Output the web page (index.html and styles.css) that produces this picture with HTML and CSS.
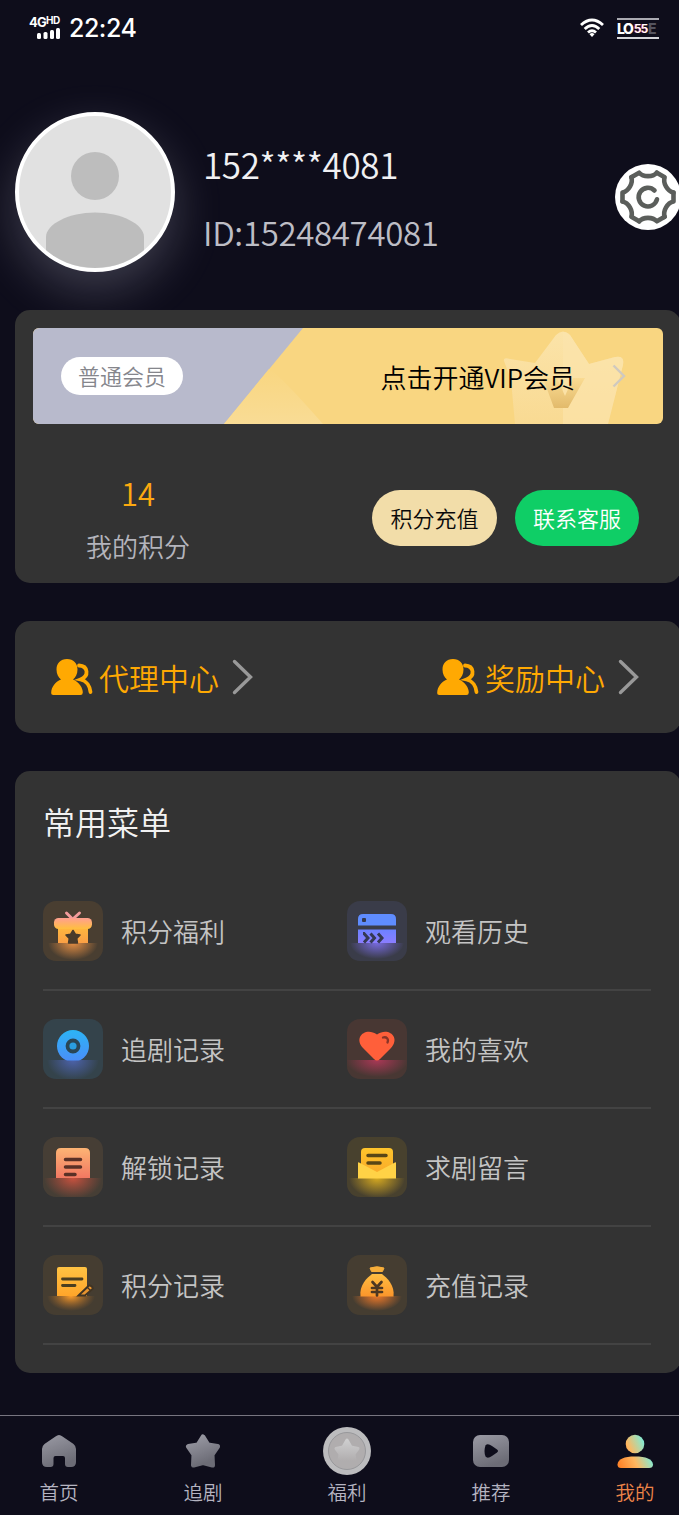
FILE: index.html
```html
<!DOCTYPE html>
<html lang="zh-CN">
<head>
<meta charset="utf-8">
<title>我的</title>
<link rel="stylesheet" href="styles.css">
</head>
<body>
<div class="screen">
  <header class="status">
    <div class="signal">
      <div class="net">4G<span class="hd">HD</span></div>
      <svg class="bars" width="26" height="11" viewBox="0 0 26 11" fill="#fff"><rect x="1" y="5" width="4" height="6" rx="1.500"/><rect x="7.500" y="4" width="4" height="7" rx="1.500"/><rect x="14" y="2" width="4" height="9" rx="1.500"/><rect x="20" y="0" width="4" height="11" rx="1.500"/></svg>
    </div>
    <div class="clock">22:24</div>
    <svg class="wifi" width="24" height="20" viewBox="0 0 24 20" fill="none" stroke="#fff" stroke-width="2.900"><path d="M1 7Q12-3 23 7"/><path d="M4.700 11Q12 4 19.300 11"/><path d="M8 14.500Q12 11 16 14.500"/><path d="M9.500 16.200Q12 14 14.500 16.200L12 19Z" fill="#fff" stroke="none"/></svg>
    <div class="battery"><span class="lo">LO</span><span class="level">55</span><span class="e">E</span></div>
  </header>

  <section class="profile">
    <svg class="avatar" viewBox="0 0 152 152"><circle cx="76" cy="60" r="24" fill="#bdbdbd"/><path d="M27 160V121C27 108 50 96.500 76 96.500S125 108 125 121V160Z" fill="#bdbdbd"/></svg>
    <div class="who">
      <div class="phone">152****4081</div>
      <div class="uid">ID:15248474081</div>
    </div>
    <svg class="gear" width="66" height="66" viewBox="-33 -33 66 66" fill="none" stroke="#5b5e5b" stroke-width="4.600" stroke-linecap="round" stroke-linejoin="round">
      <defs><path id="tooth" d="M25.500-4.500V4.500C19.400 5.800 14.700 13.900 16.650 19.830"/></defs>
      <circle r="33" fill="#fff" stroke="none"/>
      <use href="#tooth"/><use href="#tooth" transform="rotate(60)"/><use href="#tooth" transform="rotate(120)"/><use href="#tooth" transform="rotate(180)"/><use href="#tooth" transform="rotate(240)"/><use href="#tooth" transform="rotate(300)"/>
      <path d="M6.500-6.500A9.300 9.300 0 1 0 9 2.300"/>
    </svg>
  </section>

  <section class="card member">
    <div class="banner">
      <svg class="banner-art" viewBox="0 0 630 96">
        <defs><linearGradient id="vee" x2="0" y2="1"><stop stop-color="#fadb92"/><stop offset="1" stop-color="#e2ba6b"/></linearGradient>
        <linearGradient id="crown" x2="0" y2="1"><stop stop-color="#fce9ba"/><stop offset="1" stop-color="#f9dc9a"/></linearGradient>
        <linearGradient id="ray" x2="0" y2="1"><stop stop-color="#f9d681"/><stop offset="1" stop-color="#f9dc95"/></linearGradient></defs>
        <rect width="630" height="96" fill="#f9d681"/>
        <path d="M0 0H270L191 96H0Z" fill="#b8bacc"/>
        <path d="M191 96L236 41Q246 46 290 96Z" fill="url(#ray)"/>
        <path d="M482 96L478 52L471 33Q470 29 477 31L502 35L523 7Q530 0 537 7L556 36L582 29Q592 27 590 37L575 96Z" fill="url(#crown)" opacity=".7"/>
        <path d="M530 4Q535 4 537 7L556 36L582 29Q592 27 590 37L575 96H530Z" fill="#fce4ad" opacity=".6"/>
        <path d="M510 50H524L532 68L540 50H552L535 80H521Z" fill="url(#vee)"/>
      </svg>
      <span class="level-tag">普通会员</span>
      <span class="vip">点击开通VIP会员</span>
      <svg class="vip-arrow" width="14" height="24" viewBox="0 0 14 24" fill="none" stroke="#cfc9bf" stroke-width="2.400"><path d="M1.500 1.500L12 12L1.500 22.500"/></svg>
    </div>
    <div class="points-row">
      <div class="points"><div class="num">14</div><div class="cap">我的积分</div></div>
      <button class="pill recharge">积分充值</button>
      <button class="pill service">联系客服</button>
    </div>
  </section>

  <section class="card centers">
    <div class="center">
      <svg width="42" height="38" viewBox="0 0 42 38"><g id="people"><path d="M16 1C22.500 1 26.500 5.500 26.500 11.500C26.500 16 24.500 19.500 22 21.500C28 24 32 30 31.800 34.500Q31.700 37 29.500 37H2.500Q0 37 .2 34.500C.4 29 4 24 10 21.500C7.500 19.500 5.500 16 5.500 11.500C5.500 5.500 9.500 1 16 1Z" fill="#ffa902"/><path d="M28 7.500C37 8 38.500 18 29.500 21.500C36 23 39 29 39.500 34" fill="none" stroke="#ffa902" stroke-width="3.800" stroke-linecap="round"/></g></svg>
      <span>代理中心</span>
      <svg class="go" width="21" height="36" viewBox="0 0 21 36"><path id="chev" d="M2.500 2.500L18.500 18L2.500 33.500" fill="none" stroke="#999" stroke-width="3.400" stroke-linecap="round"/></svg>
    </div>
    <div class="center">
      <svg width="42" height="38" viewBox="0 0 42 38"><use href="#people"/></svg>
      <span>奖励中心</span>
      <svg class="go" width="21" height="36" viewBox="0 0 21 36"><use href="#chev"/></svg>
    </div>
  </section>

  <section class="card menu">
    <h2>常用菜单</h2>
    <div class="grid">
      <div class="item"><svg class="tile t-orange" viewBox="0 0 60 60">
        <defs><linearGradient id="g1" x2="0" y2="1"><stop stop-color="#ff9f91"/><stop offset="1" stop-color="#ffbf3f"/></linearGradient><linearGradient id="g1b" x2="0" y2="1"><stop stop-color="#ffb73e"/><stop offset="1" stop-color="#fb9f45"/></linearGradient><radialGradient id="w1"><stop stop-color="#f49645" stop-opacity=".9"/><stop offset="1" stop-color="#f49645" stop-opacity="0"/></radialGradient></defs>
        <svg y="42" width="60" height="18" viewBox="0 42 60 18"><ellipse cx="30" cy="42" rx="25" ry="17" fill="url(#w1)"/></svg>
        <path d="M28.500 17L23.500 12M31 17L36.500 12" stroke="#f39c9c" stroke-width="3" stroke-linecap="round"/>
        <path d="M15 27H45V42H15Z" fill="url(#g1b)"/><rect x="11" y="17" width="38" height="11" rx="4.500" fill="url(#g1)"/>
        <path d="M30 29.500L32.300 33.200L37 34L33.700 37.400L34.400 42H25.600L26.300 37.400L23 34L27.700 33.200Z" fill="#493b2b" stroke="#493b2b" stroke-width="1.600" stroke-linejoin="round"/></svg><span>积分福利</span></div>

      <div class="item"><svg class="tile t-indigo" viewBox="0 0 60 60">
        <defs><linearGradient id="g2" x2="0" y2="1"><stop stop-color="#6c82ff"/><stop offset="1" stop-color="#8b7dff"/></linearGradient><radialGradient id="w2"><stop stop-color="#7e70ef" stop-opacity=".9"/><stop offset="1" stop-color="#7e70ef" stop-opacity="0"/></radialGradient></defs>
        <svg y="42" width="60" height="18" viewBox="0 42 60 18"><ellipse cx="30" cy="42" rx="27" ry="16" fill="url(#w2)"/></svg>
        <path d="M11 24.500V18Q11 13 16 13H44Q49 13 49 18V24.500Z" fill="#5f8cff"/><path d="M11 28.500H49V42H11Z" fill="url(#g2)"/><rect x="15" y="17" width="4" height="4" rx="1" fill="#333950"/>
        <path d="M16 32.500H17L21 37L17 41.500M23.500 32.500L27.500 37L23.500 41.500M31 32.500L35 37L31 41.500" fill="none" stroke="#343953" stroke-width="3"/></svg><span>观看历史</span></div>

      <div class="item"><svg class="tile t-blue" viewBox="0 0 60 60">
        <defs><linearGradient id="g3" x2="0" y2="1"><stop stop-color="#2cb4f5"/><stop offset="1" stop-color="#4b8df9"/></linearGradient><radialGradient id="w3"><stop stop-color="#526ac3" stop-opacity=".8"/><stop offset="1" stop-color="#526ac3" stop-opacity="0"/></radialGradient></defs>
        <svg y="41" width="60" height="19" viewBox="0 41 60 19"><ellipse cx="30" cy="41" rx="26" ry="20" fill="url(#w3)"/></svg>
        <svg width="60" height="41.500" viewBox="0 0 60 41.500"><circle cx="30" cy="27" r="16" fill="url(#g3)"/></svg><circle cx="30" cy="27" r="5.500" fill="#2a9ee0" stroke="#294656" stroke-width="3.800"/></svg><span>追剧记录</span></div>

      <div class="item"><svg class="tile t-red" viewBox="0 0 60 60">
        <defs><radialGradient id="w4"><stop stop-color="#b5385a" stop-opacity=".9"/><stop offset="1" stop-color="#b5385a" stop-opacity="0"/></radialGradient></defs>
        <svg y="41" width="60" height="19" viewBox="0 41 60 19"><ellipse cx="30" cy="41" rx="31" ry="17" fill="url(#w4)"/></svg>
        <path d="M30 41.500Q28.500 41.500 27 40L16 29C6 18 19 7.500 30 15.500C41 7.500 54 18 44 29L33 40Q31.500 41.500 30 41.500Z" fill="#ff5f3a"/><path d="M36 18.500C39.500 17.500 42 20 40.500 23.500" fill="none" stroke="#8a3427" stroke-width="2.300" stroke-linecap="round"/></svg><span>我的喜欢</span></div>

      <div class="item"><svg class="tile t-peach" viewBox="0 0 60 60">
        <defs><linearGradient id="g5" x2="0" y2="1"><stop stop-color="#fdb474"/><stop offset="1" stop-color="#f27862"/></linearGradient><radialGradient id="w5"><stop stop-color="#c9523f"/><stop offset="1" stop-color="#b74f3d" stop-opacity="0"/></radialGradient></defs>
        <svg y="41" width="60" height="19" viewBox="0 41 60 19"><ellipse cx="30" cy="41" rx="29" ry="21" fill="url(#w5)"/></svg>
        <path d="M13 41V16Q13 11 18 11H42Q47 11 47 16V41Z" fill="url(#g5)"/><path d="M22.500 22.500H37.500M22.500 30H37.500M22.500 37.500H32" stroke="#5a3026" stroke-width="3.500" stroke-linecap="round"/></svg><span>解锁记录</span></div>

      <div class="item"><svg class="tile t-yellow" viewBox="0 0 60 60">
        <defs><linearGradient id="g6" x2="0" y2="1"><stop stop-color="#ffc52b"/><stop offset="1" stop-color="#f9a92a"/></linearGradient><radialGradient id="w6"><stop stop-color="#d7aa21"/><stop offset="1" stop-color="#d7aa21" stop-opacity="0"/></radialGradient></defs>
        <svg y="41" width="60" height="19" viewBox="0 41 60 19"><ellipse cx="30" cy="41" rx="28" ry="20" fill="url(#w6)"/></svg>
        <path d="M14 38V15Q14 11 18 11H42Q46 11 46 15V38Z" fill="url(#g6)"/><path d="M21 18.500H39M21 26H33" stroke="#594616" stroke-width="3.500" stroke-linecap="round"/><path d="M11 26Q11 24.500 13 26L30 35L47 26Q49 24.500 49 26V41.500H11Z" fill="#ffd246"/></svg><span>求剧留言</span></div>

      <div class="item"><svg class="tile t-gold" viewBox="0 0 60 60">
        <defs><linearGradient id="g7" x2="0" y2="1"><stop stop-color="#ffc343"/><stop offset="1" stop-color="#ffa52a"/></linearGradient><radialGradient id="w7"><stop stop-color="#ff9e29"/><stop offset="1" stop-color="#b66e27" stop-opacity="0"/></radialGradient></defs>
        <svg y="41" width="60" height="19" viewBox="0 41 60 19"><ellipse cx="28" cy="41" rx="24" ry="15" fill="url(#w7)"/></svg>
        <path d="M14 41V14Q14 12 16 12H42Q44 12 44 14V41Z" fill="url(#g7)"/><path d="M19.500 24H39M19.500 30.500H32" stroke="#4b3e20" stroke-width="2.800" stroke-linecap="round"/><path d="M35.500 40.500L46 30.500Q48.500 30 50 33.500L42 40.500Z" fill="#e8942f" stroke="#403424" stroke-width="1.900"/><path d="M44 32L47.500 35.500" stroke="#403424" stroke-width="1.300"/></svg><span>积分记录</span></div>

      <div class="item"><svg class="tile t-gold" viewBox="0 0 60 60">
        <defs><linearGradient id="g8" x2="0" y2="1"><stop stop-color="#ffbe42"/><stop offset="1" stop-color="#fb952b"/></linearGradient><radialGradient id="w8"><stop stop-color="#ee7929"/><stop offset="1" stop-color="#ee7929" stop-opacity="0"/></radialGradient></defs>
        <svg y="41" width="60" height="19" viewBox="0 41 60 19"><ellipse cx="30" cy="41" rx="25" ry="15" fill="url(#w8)"/></svg>
        <path d="M23 13Q30 10.500 37 13L35.500 16.500H24.500Z" fill="#f7ae3a" stroke="#f7ae3a" stroke-linejoin="round"/><path d="M13.500 41.500C12 30 20 23 25 19H35C40 23 48 30 46.500 41.500Z" fill="url(#g8)"/><path d="M25.500 27L30 32L34.500 27M30 32V40.500M25 33H35M25 37H35" fill="none" stroke="#4d3722" stroke-width="2.700" stroke-linecap="round"/></svg><span>充值记录</span></div>
    </div>
  </section>

  <nav class="tabs">
    <div class="tab"><svg width="48" height="48" viewBox="0 0 48 48">
      <defs><linearGradient id="gray" x2=".4" y2="1"><stop stop-color="#9b9ba5"/><stop offset="1" stop-color="#6c6c76"/></linearGradient></defs>
      <path d="M20.500 9.500Q24 6.500 27.500 9.500L38.500 17Q41 19 41 22V35Q41 40 36 40H33Q30 40 30 37V31Q30 29 28 29H20.500Q18.500 29 18.500 31V37Q18.500 40 15.500 40H12Q7 40 7 35V22Q7 19 9.500 17Z" fill="url(#gray)"/></svg><span>首页</span></div>
    <div class="tab"><svg width="48" height="48" viewBox="0 0 48 48"><path d="M24 10L29 18L38.500 19.500L33 27.500L33.500 38L24 35.500L14.500 38L15 27.500L9.500 19.500L19 18Z" fill="url(#gray)" stroke="url(#gray)" stroke-width="5" stroke-linejoin="round"/></svg><span>追剧</span></div>
    <div class="tab"><svg width="48" height="48" viewBox="0 0 48 48"><defs><linearGradient id="coin-star" x2="0" y2="1"><stop stop-color="#cececf"/><stop offset="1" stop-color="#b0adae"/></linearGradient></defs><circle cx="24" cy="24" r="24" fill="#bcbcbe"/><circle cx="24" cy="24" r="18.500" fill="#b0adae" stroke="#98989b"/><path d="M24 13L28 20L35 21.500L31 27L32 34L24 32L16 34L17 27L13 21.500L20 20Z" fill="url(#coin-star)" stroke="url(#coin-star)" stroke-width="3" stroke-linejoin="round"/></svg><span>福利</span></div>
    <div class="tab"><svg width="48" height="48" viewBox="0 0 48 48"><rect x="6" y="8" width="36" height="32" rx="7" fill="url(#gray)"/><path d="M18.500 18.500Q20.500 16 25 19L30 22.500Q32 24 30 25.500L25 29Q20.500 32 18.500 29.500Q16.500 24 18.500 18.500Z" fill="#0e0d1b"/></svg><span>推荐</span></div>
    <div class="tab active"><svg width="48" height="48" viewBox="0 0 48 48"><defs><linearGradient id="me" gradientUnits="userSpaceOnUse" x1="7" y1="34" x2="38" y2="20"><stop stop-color="#ff852b"/><stop offset=".45" stop-color="#ffb760"/><stop offset="1" stop-color="#72f2e4"/></linearGradient></defs><g fill="url(#me)"><circle cx="24" cy="17" r="9.300"/><path d="M6.500 37.500C7 32 13 29.500 24 29.500S41.500 32 42 37.500Q42 41 38 41H10Q6.500 41 6.500 37.500Z"/></g></svg><span>我的</span></div>
  </nav>
</div>
</body>
</html>
```
FILE: styles.css
```css
* { box-sizing: border-box; }
body { margin: 0; background: #0e0d1b; }
.screen {
  width: 679px;
  height: 1515px;
  overflow: hidden;
  display: flex;
  flex-direction: column;
  background: #0e0d1b;
  color: #c4c4c4;
  font-family: "Noto Sans CJK SC", "Noto Sans", sans-serif;
  font-weight: 350;
}
svg { display: block; flex: none; }

.status {
  height: 56px;
  flex: none;
  display: flex;
  align-items: center;
  padding: 0 20px 0 29px;
  color: #fff;
  font-family: Inter, Roboto, sans-serif;
}
.signal { width: 40px; height: 24px; }
.net { font: 700 13px/13px Inter, sans-serif; letter-spacing: -.8px; height: 12px; white-space: nowrap; }
.hd { font-size: 10px; letter-spacing: -.4px; vertical-align: 3px; line-height: 1px; }
.bars { margin-left: 7px; }
.clock { font: 500 25px/30px Inter, sans-serif; width: 76px; letter-spacing: -.5px; }
.wifi { margin-left: auto; }
.battery {
  width: 42px;
  height: 21px;
  margin-left: 13px;
  display: flex;
  align-items: center;
  border-top: 2px solid #aaaab2;
  border-bottom: 2px solid #d5d5da;
  font: 800 14px/17px Inter, sans-serif;
}
.lo { letter-spacing: -1.5px; width: 17px; }
.level { color: #fff; font-size: 12px; font-weight: 600; letter-spacing: -.9px; width: 14px; text-shadow: -1px 0 #c8314e; }
.e { color: #54535e; }

.profile { height: 254px; flex: none; display: flex; padding: 56px 0 0 15px; }
.avatar {
  width: 160px;
  height: 160px;
  border: 4px solid #fff;
  border-radius: 50%;
  background: #e1e1e1;
  box-shadow: 0 18px 48px rgba(222, 222, 240, .23);
}
.who { margin-left: 28px; padding-top: 27px; }
.phone { font-size: 35px; line-height: 50px; letter-spacing: -.35px; color: #f0f0f3; }
.uid { font-size: 33px; line-height: 48px; letter-spacing: -.33px; margin-top: 19px; color: #bdbdc5; }
.gear { margin: 52px -2px 0 auto; }

.card {
  flex: none;
  width: 666px;
  margin: 0 0 38px 15px;
  border-radius: 15px;
  background: #333;
  position: relative;
}
.member { height: 273px; padding: 18px; }
.banner {
  position: relative;
  height: 96px;
  border-radius: 6px;
  overflow: hidden;
  display: flex;
  align-items: center;
  padding: 0 37px 0 28px;
}
.banner-art { position: absolute; inset: 0; }
.level-tag, .vip, .vip-arrow { position: relative; }
.level-tag {
  width: 122px;
  height: 38px;
  border-radius: 19px;
  background: #fff;
  color: #85868c;
  font-size: 22px;
  line-height: 37px;
  text-align: center;
}
.vip { margin-left: auto; color: #000; font-size: 26px; line-height: 38px; padding-top: 1px; }
.vip-arrow { margin-left: 37px; }
.points-row { display: flex; align-items: flex-start; padding: 46px 24px 0 0; }
.points { width: 210px; text-align: center; }
.num { color: #fca910; font-size: 31px; line-height: 46px; }
.cap { color: #b4b4bc; font-size: 26px; line-height: 38px; margin-top: 11px; }
.pill {
  width: 125px;
  height: 56px;
  margin: 20px 0 0;
  padding: 0 0 2px;
  border: 0;
  border-radius: 28px;
  font: inherit;
  font-size: 22px;
  line-height: 54px;
}
.recharge { margin-left: auto; background: #f2dda9; color: #090909; }
.service { width: 124px; margin-left: 18px; background: #0fce66; color: #fff; }

.centers { height: 112px; display: flex; justify-content: space-between; align-items: center; padding: 0 42px 0 36px; }
.center { display: flex; align-items: center; color: #ffa902; font-size: 30px; line-height: 44px; }
.center span { margin: 0 13px 0 6px; }

.menu { height: 602px; padding: 27px 28px 28px; }
.menu h2 { margin: 0; height: 75px; font-size: 32px; line-height: 46px; font-weight: 350; color: #f2f2f2; }
.grid { display: grid; grid-template-columns: 304px 304px; grid-auto-rows: 118px; }
.item {
  display: flex;
  align-items: center;
  border-bottom: 2px solid #434343;
  font-size: 26px;
}
.item span { margin-left: 18px; line-height: 38px; }
.tile { width: 60px; height: 60px; border-radius: 13px; }
.t-orange { background: #493e31; }
.t-indigo { background: #3a3c49; }
.t-blue { background: #34434b; }
.t-red { background: #483733; }
.t-peach { background: #463e35; }
.t-yellow { background: #48412e; }
.t-gold { background: #453d31; }

.tabs {
  flex: none;
  width: 720px;
  height: 100px;
  margin: 4px 0 0 -13px;
  border-top: 1px solid #777580;
  display: grid;
  grid-template-columns: repeat(5, 144px);
}
.tab {
  display: flex;
  flex-direction: column;
  align-items: center;
  padding-top: 11px;
  color: #b5b4c1;
  font-size: 19.5px;
  line-height: 28px;
}
.tab span { margin-top: 3px; }
.active { color: #ed8549; }
```
